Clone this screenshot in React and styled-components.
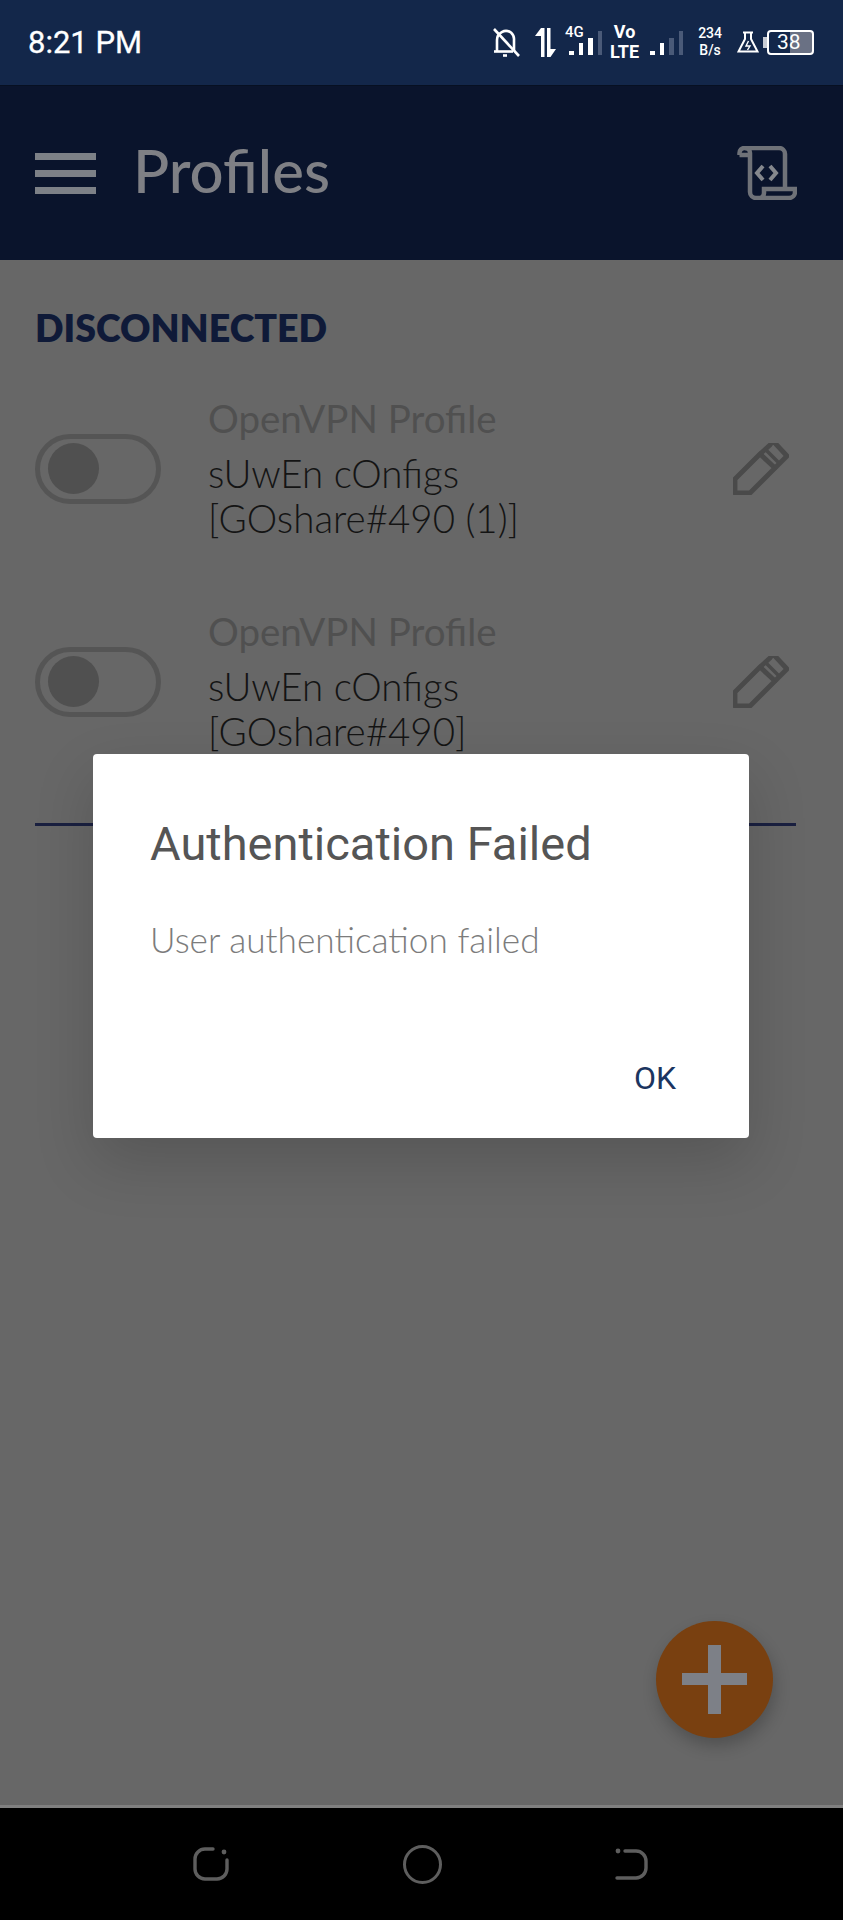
import React from "react"
import styled, { createGlobalStyle } from "styled-components"

const GlobalStyle = createGlobalStyle`
    * {
        box-sizing: border-box;
    }

    body {
        margin: 0;
        background: #676767;
    }
`

const profiles = [
    { id: 1, lines: ["sUwEn cOnfigs", "[GOshare#490 (1)]"] },
    { id: 2, lines: ["sUwEn cOnfigs", "[GOshare#490]"] },
]

const SignalBars = ({ lit }) => (
    <Bars>
        {[4, 12, 17, 24].map((height, i) => (
            <Bar key={height} $height={height} $lit={i < lit} />
        ))}
    </Bars>
)

const BellOffIcon = () => (
    <svg width="28" height="31" viewBox="0 0 28 31" fill="none" stroke="#fff" strokeWidth="2.6">
        <path d="M5 24V13a9 9 0 0 1 14-7.5a9 9 0 0 1 3 7.5V24" />
        <path d="M2 24.5H21" />
        <path d="M2 2L27 29" />
        <path d="M11 28.5h4" />
    </svg>
)

const DataArrowsIcon = () => (
    <svg width="21" height="29" viewBox="0 0 21 29" fill="#fff">
        <path d="M6 0V29H9.5V0H6L0 8H6Z" />
        <path d="M12 0H15.5V21H21L15.5 29H12Z" />
    </svg>
)

const FlaskIcon = () => (
    <svg width="22" height="22" viewBox="0 0 22 22" fill="none" stroke="#fff" strokeWidth="2">
        <path d="M6 1.5H16M8 1.5V8L1.5 20.5H20.5L14 8V1.5" />
        <path d="M11.5 10L9 15H13L10.5 19" strokeWidth="1.4" />
    </svg>
)

const MenuIcon = () => (
    <svg width="61" height="41" viewBox="0 0 61 41" fill="#7d8187">
        <rect x="0" y="0" width="61" height="7" />
        <rect x="0" y="17" width="61" height="7" />
        <rect x="0" y="34" width="61" height="7" />
    </svg>
)

const ScriptIcon = () => (
    <svg width="60" height="54" viewBox="0 0 60 54" fill="none" stroke="#6f7278" strokeWidth="4.5">
        <path d="M2.5 9V7a5 5 0 0 1 5-5H42a6 6 0 0 1 6 6V42" />
        <path d="M2.5 9H13" />
        <path d="M8 2a5 5 0 0 1 5 5V46a6 6 0 0 0 6 6H52a6 6 0 0 0 6-6V43H27V47a5 5 0 0 1-6 5" />
        <path d="M26 20L20 27L26 34M33 20L39 27L33 34" stroke="#85888d" strokeWidth="4" />
    </svg>
)

const PencilIcon = () => (
    <svg width="56" height="52" viewBox="0 0 56 52" fill="none" stroke="#4a4a4a" strokeWidth="4.8" strokeLinejoin="round">
        <path d="M2 36L27 11L42 25L17 50H2Z" />
        <path d="M27 11L37 2a4 4 0 0 1 5-2L54 13L42 25" />
        <path d="M33 7L46 20" strokeWidth="3.5" />
    </svg>
)

const RecentIcon = () => (
    <svg width="36" height="34" viewBox="0 0 36 34" fill="none" stroke="#5e5e5e" strokeWidth="3.4" strokeLinecap="round">
        <path d="M20 2H12A10 10 0 0 0 2 12V22A10 10 0 0 0 12 32H24A10 10 0 0 0 34 22V13" />
        <circle cx="31" cy="5" r="2.4" fill="#5e5e5e" stroke="none" />
    </svg>
)

const BackIcon = () => (
    <svg width="33" height="32" viewBox="0 0 33 32" fill="none" stroke="#5e5e5e" strokeWidth="3.4" strokeLinecap="round">
        <path d="M10 3H21A10 10 0 0 1 31 13V20A10 10 0 0 1 21 30H2" />
        <circle cx="3" cy="3" r="2.4" fill="#5e5e5e" stroke="none" />
    </svg>
)

const ProfileRow = ({ lines }) => (
    <Row>
        <Toggle>
            <Knob />
        </Toggle>
        <ProfileText>
            <ProfileKind>OpenVPN Profile</ProfileKind>
            {lines.map((line) => (
                <ProfileName key={line}>{line}</ProfileName>
            ))}
        </ProfileText>
        <PencilIcon />
    </Row>
)

export default function App() {
    return (
        <Screen>
            <GlobalStyle />

            <StatusBar>
                <Clock>8:21 PM</Clock>
                <StatusIcons>
                    <BellOffIcon />
                    <DataArrowsIcon />
                    <NetworkBlock>
                        <FourG>4G</FourG>
                        <SignalBars lit={3} />
                    </NetworkBlock>
                    <VolteLabel>
                        <span>Vo</span>
                        <span>LTE</span>
                    </VolteLabel>
                    <SignalBars lit={2} />
                    <Speed>
                        <span>234</span>
                        <span>B/s</span>
                    </Speed>
                    <FlaskIcon />
                    <Battery>
                        <BatteryNub />
                        <BatteryBody>
                            <BatteryLevel>38</BatteryLevel>
                        </BatteryBody>
                    </Battery>
                </StatusIcons>
            </StatusBar>

            <Header>
                <MenuIcon />
                <Title>Profiles</Title>
                <ScriptIcon />
            </Header>

            <Content>
                <SectionTitle>DISCONNECTED</SectionTitle>
                {profiles.map((profile) => (
                    <ProfileRow key={profile.id} lines={profile.lines} />
                ))}
                <Divider />

                <Dialog>
                    <DialogTitle>Authentication Failed</DialogTitle>
                    <DialogMessage>User authentication failed</DialogMessage>
                    <DialogActions>
                        <OkButton>OK</OkButton>
                    </DialogActions>
                </Dialog>

                <Fab>
                    <svg width="65" height="69" viewBox="0 0 65 69" fill="#7d8087">
                        <rect x="0" y="28" width="65" height="12" />
                        <rect x="26" y="0" width="13" height="69" />
                    </svg>
                </Fab>
            </Content>

            <NavBar>
                <RecentIcon />
                <HomeButton />
                <BackIcon />
            </NavBar>
        </Screen>
    )
}

const Screen = styled.div`
    width: 843px;
    height: 1920px;
    display: flex;
    flex-direction: column;
    overflow: hidden;
    background: #676767;
`

const StatusBar = styled.div`
    height: 85px;
    flex: none;
    display: flex;
    align-items: center;
    justify-content: space-between;
    padding: 0 29px 1px 28px;
    background: #13274a;
    color: #fff;
`

const Clock = styled.div`
    font-family: Roboto, sans-serif;
    font-size: 31px;
    font-weight: 400;
    -webkit-text-stroke: 0.3px #fff;
`

const StatusIcons = styled.div`
    display: flex;
    align-items: center;
    gap: 15px;
`

const NetworkBlock = styled.div`
    position: relative;
    display: flex;
    margin-left: -2px;
`

const FourG = styled.span`
    position: absolute;
    top: -4px;
    left: -4px;
    font-family: Roboto, sans-serif;
    font-size: 15px;
    font-weight: 500;
    line-height: 15px;
`

const Bars = styled.div`
    display: flex;
    align-items: flex-end;
    gap: 5px;
    height: 26px;
`

const Bar = styled.span`
    width: 4.5px;
    height: ${(props) => props.$height}px;
    background: ${(props) => (props.$lit ? "#fff" : "#4a5a78")};
`

const VolteLabel = styled.div`
    display: flex;
    flex-direction: column;
    align-items: center;
    margin: 0 -4px 0 -7px;
    font-family: Roboto, sans-serif;
    font-size: 18px;
    font-weight: 700;
    line-height: 20px;
`

const Speed = styled.div`
    display: flex;
    flex-direction: column;
    align-items: center;
    font-family: Roboto, sans-serif;
    font-size: 14px;
    font-weight: 500;
    line-height: 17px;
`

const Battery = styled.div`
    display: flex;
    align-items: center;
    margin-left: -11px;
`

const BatteryNub = styled.span`
    width: 4px;
    height: 11px;
    background: #c8ccd4;
`

const BatteryBody = styled.div`
    width: 47px;
    height: 25px;
    border: 2px solid #fff;
    border-radius: 4px;
    display: flex;
    align-items: center;
    padding-left: 8px;
    background: linear-gradient(to right, transparent 50%, #6a7184 50%);
`

const BatteryLevel = styled.span`
    font-family: Roboto, sans-serif;
    font-size: 21px;
    line-height: 1;
`

const Header = styled.header`
    height: 175px;
    flex: none;
    display: flex;
    align-items: center;
    padding: 0 46px 0 35px;
    background: #0a142c;
    border-top: 1px solid #071022;
`

const Title = styled.h1`
    flex: 1;
    margin: 0 0 6px 37px;
    font-family: Lato, sans-serif;
    font-size: 60px;
    font-weight: 500;
    color: #7f8085;
`

const Content = styled.main`
    position: relative;
    flex: 1;
    padding: 49px 47px 0 35px;
    border-bottom: 3px solid #808080;
`

const SectionTitle = styled.h2`
    margin: 0 0 15px;
    font-family: Lato, sans-serif;
    font-size: 37.5px;
    font-weight: 800;
    line-height: 38px;
    color: #0f1a38;
`

const Row = styled.div`
    height: 213px;
    display: flex;
    align-items: center;
    padding-right: 7px;
`

const Toggle = styled.div`
    width: 126px;
    height: 70px;
    flex: none;
    display: flex;
    align-items: center;
    padding-left: 8px;
    border: 5px solid #555;
    border-radius: 35px;
`

const Knob = styled.span`
    width: 51px;
    height: 51px;
    border-radius: 50%;
    background: #505050;
`

const ProfileText = styled.div`
    flex: 1;
    padding-left: 47px;
`

const ProfileKind = styled.div`
    margin-bottom: 11px;
    font-family: Lato, sans-serif;
    font-size: 38.5px;
    font-weight: 400;
    line-height: 44px;
    color: #505050;
`

const ProfileName = styled.div`
    font-family: Lato, sans-serif;
    font-size: 38.5px;
    font-weight: 300;
    line-height: 45px;
    color: #141414;
`

const Divider = styled.div`
    height: 3px;
    margin-top: 35px;
    background: #1a2040;
`

const Dialog = styled.div`
    position: absolute;
    top: 494px;
    left: 93px;
    width: 656px;
    height: 384px;
    padding: 62px 73px 0 57px;
    display: flex;
    flex-direction: column;
    background: #fff;
    border-radius: 4px;
    box-shadow: 0 24px 60px rgba(0, 0, 0, 0.16);
`

const DialogTitle = styled.div`
    font-family: Roboto, sans-serif;
    font-size: 47px;
    font-weight: 400;
    line-height: 56px;
    color: #555;
`

const DialogMessage = styled.div`
    margin-top: 45px;
    font-family: Lato, sans-serif;
    font-size: 35.2px;
    font-weight: 300;
    line-height: 44px;
    color: #7c7c7c;
`

const DialogActions = styled.div`
    margin-top: auto;
    padding-bottom: 41px;
    display: flex;
    justify-content: flex-end;
`

const OkButton = styled.span`
    font-family: Roboto, sans-serif;
    font-size: 32px;
    line-height: 38px;
    color: #1b3560;
`

const Fab = styled.div`
    position: absolute;
    top: 1361px;
    left: 656px;
    width: 117px;
    height: 117px;
    display: flex;
    align-items: center;
    justify-content: center;
    border-radius: 50%;
    background: #794010;
    box-shadow: 2px 8px 16px rgba(0, 0, 0, 0.22);
`

const NavBar = styled.nav`
    height: 112px;
    flex: none;
    display: flex;
    align-items: center;
    padding: 0 195px 0 193px;
    justify-content: space-between;
    background: #000;
`

const HomeButton = styled.span`
    width: 39px;
    height: 39px;
    border: 3.5px solid #5e5e5e;
    border-radius: 50%;
`
